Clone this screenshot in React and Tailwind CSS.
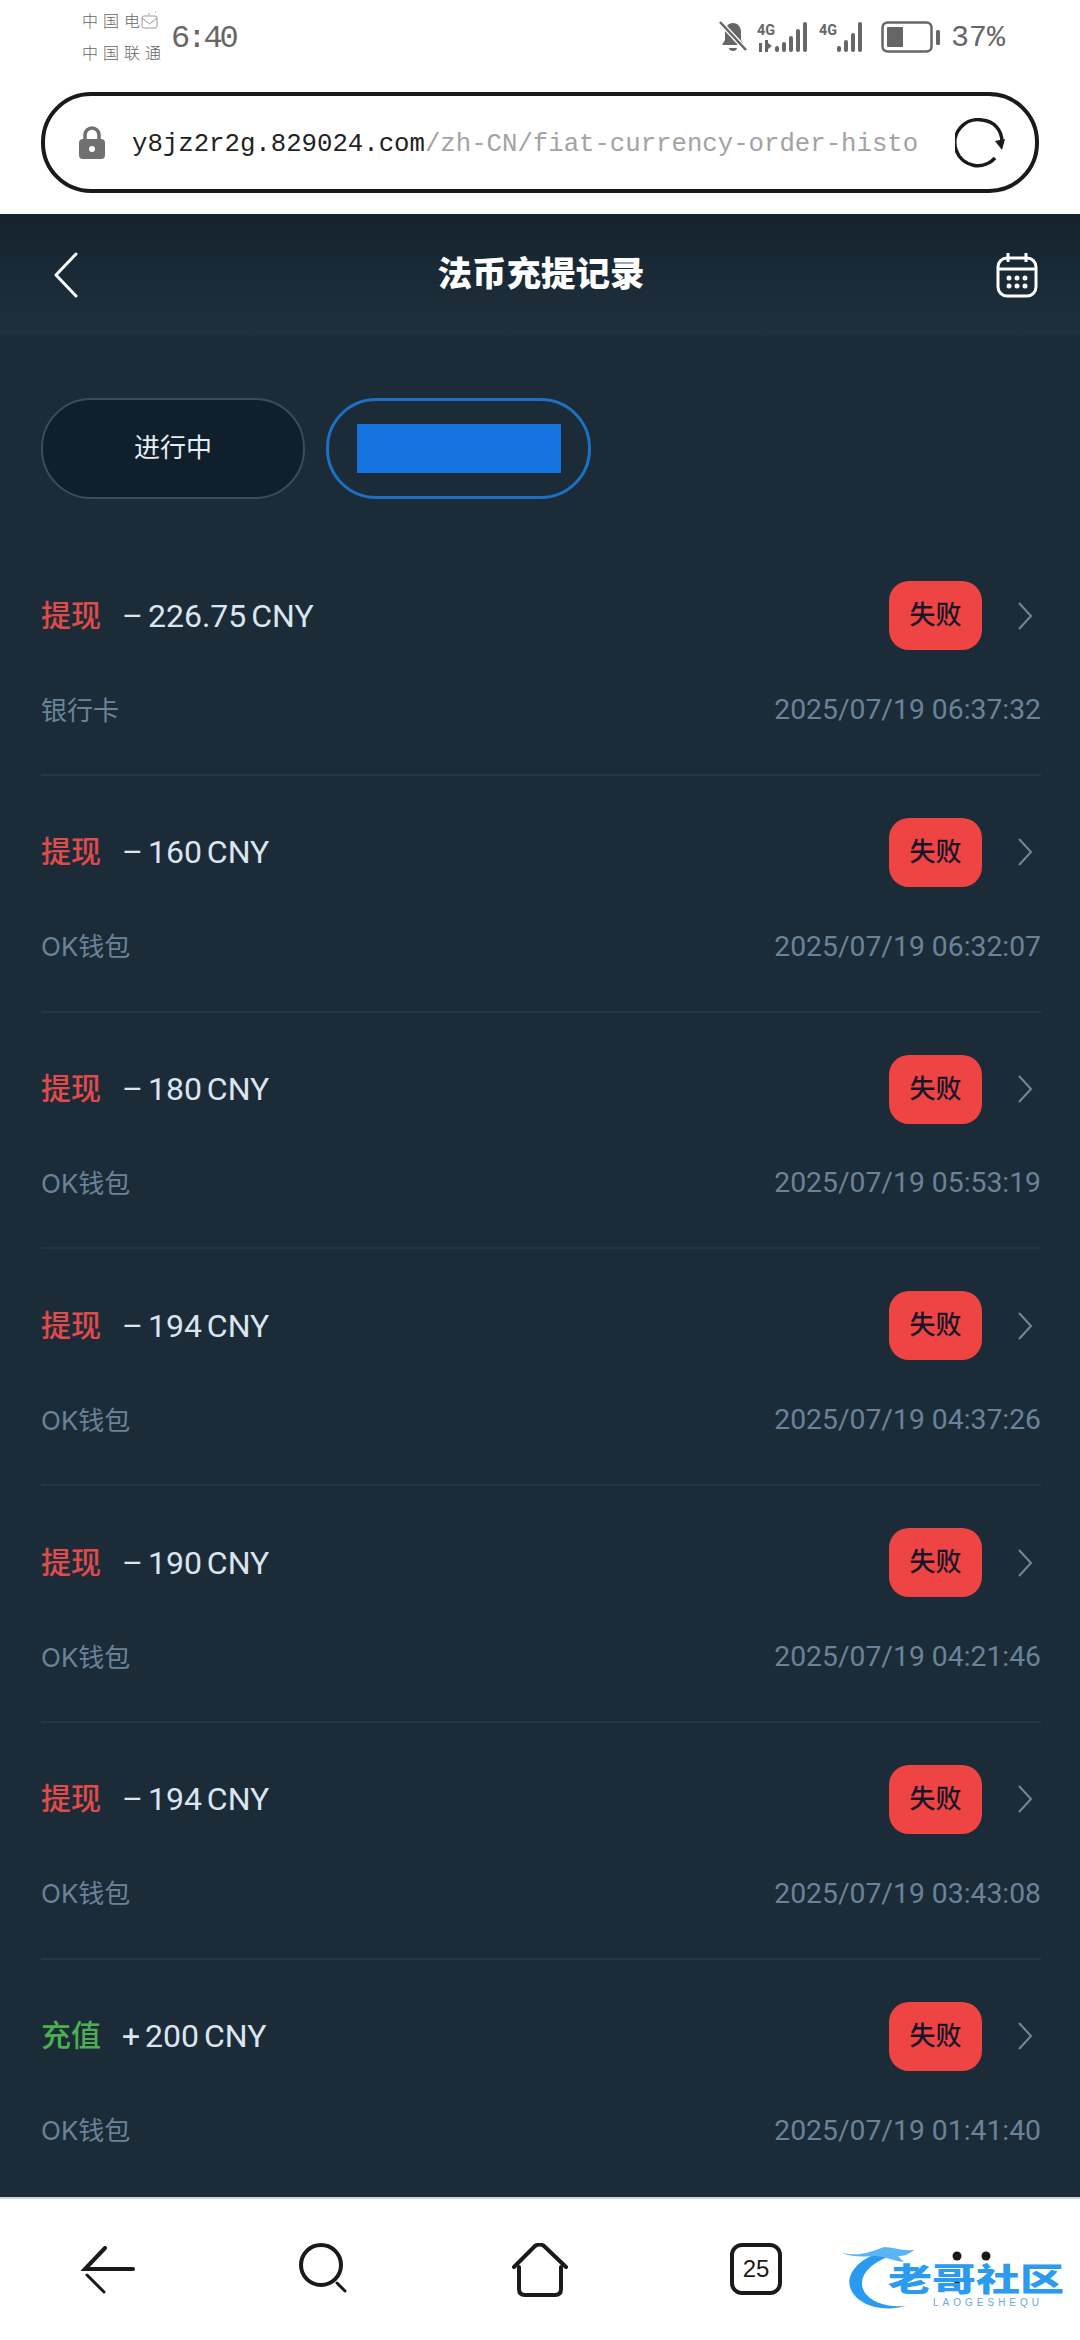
const UI_FONT = "font-['Roboto','Noto_Sans_CJK_SC',sans-serif]"

const records = [
  { type: "提现", amount: "– 226.75 CNY", method: "银行卡", time: "2025/07/19 06:37:32" },
  { type: "提现", amount: "– 160 CNY", method: "OK钱包", time: "2025/07/19 06:32:07" },
  { type: "提现", amount: "– 180 CNY", method: "OK钱包", time: "2025/07/19 05:53:19" },
  { type: "提现", amount: "– 194 CNY", method: "OK钱包", time: "2025/07/19 04:37:26" },
  { type: "提现", amount: "– 190 CNY", method: "OK钱包", time: "2025/07/19 04:21:46" },
  { type: "提现", amount: "– 194 CNY", method: "OK钱包", time: "2025/07/19 03:43:08" },
  { type: "充值", amount: "+ 200 CNY", method: "OK钱包", time: "2025/07/19 01:41:40" },
]

function Signal({ bars, label, arrows }) {
  return (
    <svg width={bars === 5 ? 58 : 49} height="32" viewBox={bars === 5 ? "0 0 58 32" : "0 0 49 32"} fill="#666">
      <text x="0" y="14" fontSize="15" fontWeight="700" fontFamily="'Roboto', sans-serif" textLength="18" lengthAdjust="spacingAndGlyphs">{label}</text>
      {arrows && <path d="M2 22h3v9h-3zM8 19h3v12h-3zM11 22l4 3-4 3z" />}
      {bars === 5 ? (
        <g>
          <rect x="18" y="25" width="4" height="6" rx="2" />
          <rect x="25" y="21" width="4" height="10" rx="2" />
          <rect x="32" y="15" width="4" height="16" rx="2" />
          <rect x="39" y="8" width="4" height="23" rx="2" />
          <rect x="46" y="1" width="4" height="30" rx="2" />
        </g>
      ) : (
        <g>
          <rect x="18" y="25" width="4" height="6" rx="2" />
          <rect x="25" y="19" width="4" height="12" rx="2" />
          <rect x="32" y="12" width="4" height="19" rx="2" />
          <rect x="39" y="1" width="4" height="30" rx="2" />
        </g>
      )}
    </svg>
  )
}

function StatusBar() {
  return (
    <div className="flex justify-between items-start h-[92px] pl-[82px] pr-[75px] text-[#666]">
      <div className="flex items-center pt-[4px]">
        <div className="flex flex-col w-[89px] font-['Noto_Sans_CJK_SC',sans-serif] font-light text-[16px] leading-[32px] tracking-[5px]">
          <div className="flex items-center h-[32px]">
            <span className="whitespace-nowrap">中国电</span>
            <svg width="18" height="20" viewBox="0 0 18 20" fill="none" stroke="#999" strokeWidth="1" className="ml-[-4px]">
              <rect x="1" y="6" width="15" height="12" rx="2" />
              <path d="M1 8l7.500 6 7.500-6M8 5v-2M14 2h1" />
            </svg>
          </div>
          <span className="whitespace-nowrap tracking-[5px]">中国联通</span>
        </div>
        <span className="mt-[6px] font-['Liberation_Mono',monospace] text-[32px] tracking-[-3px] leading-none">6:40</span>
      </div>
      <div className="flex items-center pt-[20px]">
        <svg width="30" height="34" viewBox="0 0 30 34" fill="#666">
          <path d="M15 3c5 0 8 4 8 9v8l3 5H4l3-5v-8c0-5 3-9 8-9zM11 28h8c0 2-2 3-4 3s-4-1-4-3z" />
          <path d="M2 2l26 28" stroke="#fff" strokeWidth="5" />
          <path d="M2 2l26 28" stroke="#666" strokeWidth="2.500" />
        </svg>
        <div className="ml-[9px]">
          <Signal bars={5} label="4G" arrows />
        </div>
        <div className="ml-[4px]">
          <Signal bars={4} label="4G" />
        </div>
        <svg width="60" height="32" viewBox="0 0 60 32" fill="none" className="ml-[13px]">
          <rect x="1.500" y="1.500" width="49" height="29" rx="5" stroke="#666" strokeWidth="2.500" />
          <rect x="6" y="6" width="16" height="20" rx="1" fill="#666" />
          <rect x="55" y="9" width="4" height="15" rx="1.500" fill="#666" />
        </svg>
        <span className="ml-[10px] mt-[2px] font-['Liberation_Mono',monospace] text-[30px] leading-none">37%</span>
      </div>
    </div>
  )
}

function UrlBar() {
  return (
    <div className="mx-[41px] h-[101px] rounded-[50px] border-[4px] border-[#1a1a1a] flex items-center pl-[34px] bg-white">
      <svg width="26" height="34" viewBox="0 0 26 34" className="shrink-0">
        <path d="M6 14V9a7 7 0 0 1 14 0v5" fill="none" stroke="#707070" strokeWidth="3.500" />
        <rect x="0" y="13" width="26" height="20" rx="4" fill="#707070" />
        <circle cx="13" cy="23" r="3" fill="#fff" />
      </svg>
      <div className="ml-[27px] mt-[4px] w-[790px] whitespace-nowrap font-['Liberation_Mono',monospace] text-[25.7px] leading-none">
        <span className="text-[#222]">y8jz2r2g.829024.com</span>
        <span className="text-[#a3a3a3]">/zh-CN/fiat-currency-order-histo</span>
      </div>
      <svg width="50" height="50" viewBox="0 0 50 50" className="ml-[33px] shrink-0" fill="none" stroke="#1a1a1a" strokeWidth="3.500">
        <path d="M40 40A23 23 0 1 1 27 2c12 1 20 10 20 22" />
        <path d="M40 23l7 9 3-11z" fill="#1a1a1a" stroke="none" />
      </svg>
    </div>
  )
}

function Header() {
  return (
    <div className="h-[121px] shrink-0 flex items-center justify-between pl-[44px] pr-[42px] bg-gradient-to-b from-[#14232e] to-[#1f303d]">
      <div className="w-[42px] pl-[10px] flex">
        <svg width="24" height="46" viewBox="0 0 24 46" fill="none" stroke="#fff" strokeWidth="3" strokeLinecap="round" strokeLinejoin="round">
          <path d="M22 2L2 23l20 21" />
        </svg>
      </div>
      <h1 className="text-white text-[34.5px] leading-none font-black">法币充提记录</h1>
      <svg width="42" height="46" viewBox="0 0 42 46" fill="none" stroke="#fff" strokeWidth="3">
        <rect x="2" y="6" width="38" height="38" rx="9" />
        <path d="M2 17h38M12 1v9M30 1v9" />
        <g fill="#fff" stroke="none">
          <circle cx="13" cy="26" r="2.500" />
          <circle cx="21" cy="26" r="2.500" />
          <circle cx="29" cy="26" r="2.500" />
          <circle cx="13" cy="34" r="2.500" />
          <circle cx="21" cy="34" r="2.500" />
          <circle cx="29" cy="34" r="2.500" />
        </g>
      </svg>
    </div>
  )
}

function Tabs() {
  return (
    <div className="flex gap-[21px] mt-[63px]">
      <div className="w-[264px] h-[101px] rounded-[50px] border-2 border-[#3b4d5c] bg-[#0f1f2b] flex items-center justify-center text-[#e6edf3] text-[26px]">
        进行中
      </div>
      <div className="w-[265px] h-[101px] rounded-[50px] border-[3px] border-[#1f6fc4] flex items-center justify-center">
        <div className="w-[204px] h-[49px] bg-[#1573e0]" />
      </div>
    </div>
  )
}

function RecordRow({ record, last }) {
  const typeColor = record.type === "充值" ? "text-[#4caf50]" : "text-[#e04b4b]"
  return (
    <div className={`h-[236.8px] pt-[42px] shrink-0 ${last ? "" : "border-b-2 border-[#253644]"}`}>
      <div className="h-[69px] flex items-center">
        <span className={`text-[30px] font-medium leading-none ${typeColor}`}>{record.type}</span>
        <span className="ml-[21px] text-[32px] leading-none text-[#dbe5f0] [word-spacing:-3px] whitespace-pre">{record.amount}</span>
        <div className="ml-auto w-[93px] h-[69px] rounded-[20px] bg-[#ef4444] flex items-center justify-center text-[26px] font-medium text-[#161628]">
          失败
        </div>
        <svg width="16" height="30" viewBox="0 0 16 30" fill="none" stroke="#71879b" strokeWidth="2" className="ml-[35px] mr-[8px]">
          <path d="M2 2l12 13L2 28" />
        </svg>
      </div>
      <div className="mt-[39px] h-[42px] flex items-center justify-between text-[26px] text-[#6a8399]">
        <span className="font-['Inter','Noto_Sans_CJK_SC',sans-serif]">{record.method}</span>
        <span className="text-[28.3px] leading-none">{record.time}</span>
      </div>
    </div>
  )
}

function BottomNav() {
  return (
    <div className="relative flex-1 bg-white border-t-2 border-[#c9d6df] grid grid-cols-5 pt-[44px] items-start justify-items-center">
      <svg width="54" height="48" viewBox="0 0 54 48" fill="none" stroke="#1a1a1a" strokeLinecap="round" className="mt-[3px]">
        <path d="M24 2L4 23h48" strokeWidth="4" />
        <path d="M6 29l17 17" strokeWidth="3" />
      </svg>
      <svg width="50" height="50" viewBox="0 0 50 50" fill="none" stroke="#1a1a1a" strokeWidth="4" strokeLinecap="round">
        <ellipse cx="22" cy="22" rx="20" ry="20" />
        <path d="M38 40l8 8" strokeWidth="3" />
      </svg>
      <svg width="56" height="54" viewBox="0 0 56 54" fill="none" stroke="#1a1a1a" strokeWidth="4" strokeLinecap="round" strokeLinejoin="round">
        <path d="M2 24L23 3c3-2 6-2 9 0l22 21" />
        <path d="M7 24v22c0 4 2 6 6 6h30c4 0 6-2 6-6V24" />
      </svg>
      <div className="w-[52px] h-[52px] rounded-[12px] border-[4px] border-[#1a1a1a] flex items-center justify-center text-[24px] leading-none font-['Liberation_Sans',sans-serif] text-[#1a1a1a]">
        25
      </div>
      <svg width="40" height="40" viewBox="0 0 40 40" fill="#1a1a1a" className="mt-[8px]">
        <circle cx="5" cy="5" r="4.500" />
        <circle cx="34" cy="5" r="4.500" />
        <circle cx="5" cy="33" r="3" />
      </svg>
      {/* watermark over the last nav item */}
      <div className="absolute left-[842px] top-[46px] w-[222px] h-[70px]">
        <svg width="110" height="70" viewBox="0 0 110 70" fill="none" className="absolute left-0 top-0">
          <path d="M44 6C18 12 4 28 8 42c5 17 30 26 56 19 -24 2-42-7-44-21C19 28 30 18 46 12z" fill="#2a9af0" />
          <path d="M0 8c20 4 30-2 42-6 8 0 18 4 30 3 -6 5-10 6-16 6l6 6c-10-1-20-6-30-6C20 12 10 12 0 8z" fill="#5bb5f5" />
        </svg>
        <div className="absolute left-[46px] top-[16px] w-[176px] text-[44px] leading-none font-black whitespace-nowrap text-[#2b9bf0] scale-y-[0.72] origin-top font-['Noto_Sans_CJK_SC',sans-serif]">
          老哥社区
        </div>
        <div className="absolute left-[91px] top-[53px] text-[10px] leading-none tracking-[4px] text-[#6aa8dc] font-['Liberation_Sans',sans-serif]">
          LAOGESHEQU
        </div>
      </div>
    </div>
  )
}

export default function App() {
  return (
    <div className={`w-[1080px] h-[2340px] overflow-hidden flex flex-col bg-white ${UI_FONT}`}>
      <div className="h-[214px] shrink-0 bg-white">
        <StatusBar />
        <UrlBar />
      </div>
      <Header />
      <div className="h-[1862px] shrink-0 bg-[#1c2b38] pl-[41px] pr-[39px] flex flex-col">
        <Tabs />
        <div className="mt-[40px] flex flex-col">
          {records.map((r, i) => (
            <RecordRow key={r.time} record={r} last={i === records.length - 1} />
          ))}
        </div>
      </div>
      <BottomNav />
    </div>
  )
}
